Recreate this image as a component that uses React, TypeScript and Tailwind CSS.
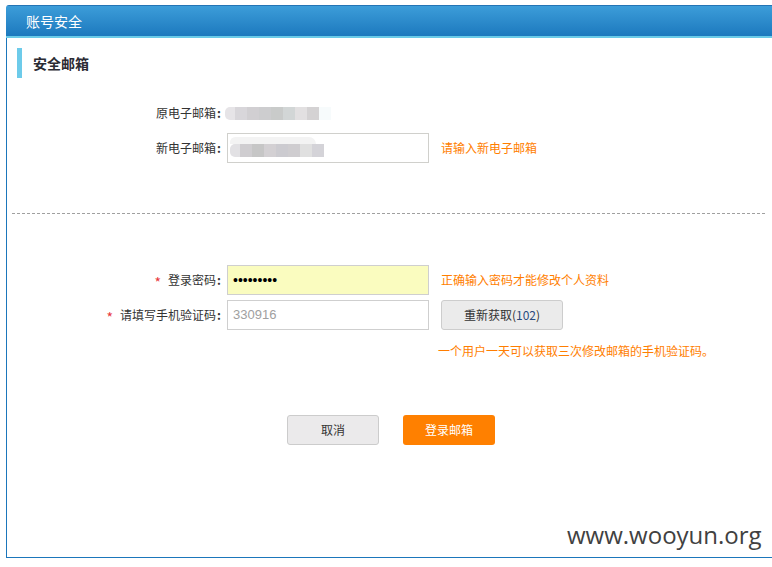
import React from "react";

const cjk = { fontFamily: '"Noto Sans CJK SC", "Noto Sans", sans-serif' };

const blurRow1 = ["#e6e4e7", "#d8d6da", "#d1cfd2", "#cdcdcf", "#c9cbca", "#d2d6d6", "#e2e0e1", "#d4d2d3", "#f7fbfc"];
const blurRow2 = ["#e2e1e4", "#cfcdd0", "#c6c6c6", "#d3d0d3", "#cccbd0", "#cfcdd0", "#e0e0e0", "#d4d3d8"];

function Blur({ colors, top }: { colors: string[]; top?: boolean }) {
  return (
    <div className="flex flex-col">
      {top && (
        <div className="flex h-[7px]">
          <div className="w-[86px] h-full bg-[#f3f3f3] rounded-tl-[6px] rounded-tr-[8px]" />
        </div>
      )}
      <div className="flex h-[13px]">
        {colors.map((c, i) => (
          <div key={i} className={`h-full ${i === 0 ? "w-[10px] rounded-l-[5px]" : "w-[12px]"}`} style={{ backgroundColor: c }} />
        ))}
      </div>
    </div>
  );
}

function Label({ text, required }: { text: string; required?: boolean }) {
  return (
    <div className="w-[216px] flex justify-end items-center text-[12px] text-[#333] pr-[2px]">
      {required && <span className="text-[#e8383d] text-[14px] mr-[7px] leading-none mt-[3px]">*</span>}
      <span>{text}</span>
      <span className="font-bold ml-[1px]">:</span>
    </div>
  );
}

export default function App() {
  return (
    <div className="w-[772px] h-[567px] bg-white relative overflow-hidden pt-[5px] pl-[6px]" style={cjk}>
      <div className="w-[780px] rounded-tl-[3px] overflow-hidden">
        {/* header */}
        <div className="h-[31px] border-t border-[#2474b5] bg-gradient-to-b from-[#3c9dd9] to-[#1c79be] flex items-center pl-[20px]">
          <span className="text-white text-[14px]">账号安全</span>
        </div>
        <div className="h-[2px] bg-[#6acbe8]" />

        {/* body */}
        <div className="h-[520px] pt-[10px] border-l border-b border-[#1b76bb]">
          <div className="ml-[10px] h-[30px] border-l-[5px] border-[#6dcbea] flex items-center pl-[11px]">
            <span className="text-[14px] font-bold text-[#2b2b33]">安全邮箱</span>
          </div>

          <div className="mt-[20px] h-[30px] flex items-center">
            <Label text="原电子邮箱" />
            <div className="ml-[2px]">
              <Blur colors={blurRow1} />
            </div>
          </div>

          <div className="mt-[5px] h-[30px] flex items-center">
            <Label text="新电子邮箱" />
            <div className="ml-[4px] w-[202px] h-[30px] border border-[#d0d0cc] bg-white pl-[2px] pt-[3px]">
              <Blur colors={blurRow2} top />
            </div>
            <span className="ml-[12px] text-[12px] text-[#ff7e00]">请输入新电子邮箱</span>
          </div>

          <div className="mt-[50px] ml-[5px] w-[753px] h-[1px] bg-[repeating-linear-gradient(to_right,#a0a0a0_0_3px,transparent_3px_5px)]" />

          <div className="mt-[51px] h-[30px] flex items-center">
            <Label text="登录密码" required />
            <div className="ml-[4px] w-[202px] h-[30px] border border-[#cfcfcf] bg-[#fafcbf] flex items-center pl-[5px]">
              <span className="text-[14px] text-black leading-none" style={{ fontFamily: '"Liberation Sans", sans-serif' }}>
                •••••••••
              </span>
            </div>
            <span className="ml-[12px] text-[12px] text-[#ff7e00]">正确输入密码才能修改个人资料</span>
          </div>

          <div className="mt-[5px] h-[30px] flex items-center">
            <Label text="请填写手机验证码" required />
            <div className="ml-[4px] w-[202px] h-[30px] border border-[#cfcfcf] bg-white flex items-center pl-[5px]">
              <span className="text-[13px] text-[#a0a0a0]" style={{ fontFamily: '"Liberation Sans", sans-serif' }}>
                330916
              </span>
            </div>
            <button className="ml-[12px] w-[122px] h-[30px] rounded-[3px] border border-[#cdcdcd] bg-[#ebebeb] text-[12px] text-[#333] flex items-center justify-center">
              重新获取<span className="text-[#333]">(</span>
              <span className="text-[#2a4a7c]">102</span>
              <span className="text-[#333]">)</span>
            </button>
          </div>

          <div className="mt-[11px] h-[20px] flex items-center pl-[431px]">
            <span className="text-[12px] text-[#ff7e00]">一个用户一天可以获取三次修改邮箱的手机验证码。</span>
          </div>

          <div className="mt-[54px] flex gap-[24px] pl-[280px]">
            <button className="w-[92px] h-[30px] rounded-[3px] border border-[#cccccc] bg-[#ebeaeb] text-[12px] text-[#333]">取消</button>
            <button className="w-[92px] h-[30px] rounded-[3px] bg-[#ff8000] text-[12px] text-white">登录邮箱</button>
          </div>
        </div>
      </div>

      <div
        className="absolute left-[567px] top-[523px] text-[24px] text-[#414141] leading-none"
        style={{ fontFamily: '"Open Sans", sans-serif' }}
      >
        www.wooyun.org
      </div>
    </div>
  );
}
